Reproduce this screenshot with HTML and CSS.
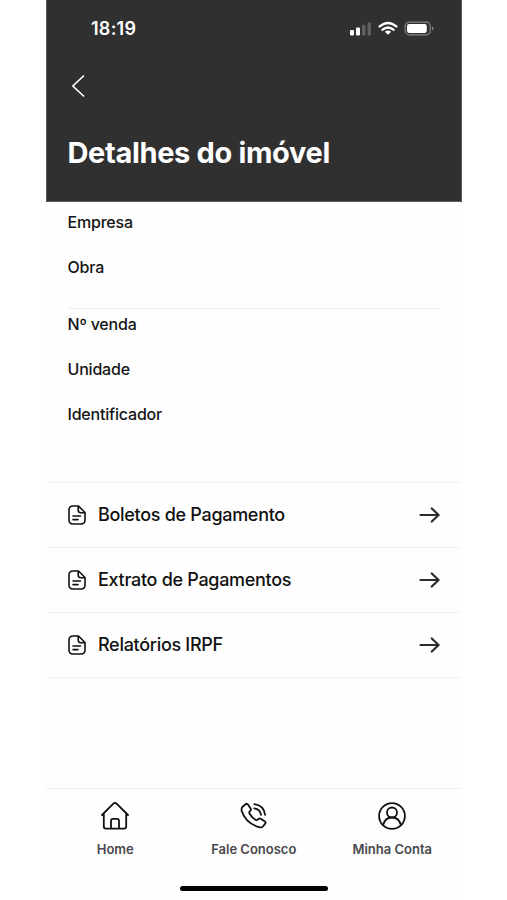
FILE: index.html
```html
<!DOCTYPE html>
<html lang="pt-BR">
<head>
<meta charset="utf-8">
<meta name="viewport" content="width=device-width, initial-scale=1">
<title>Detalhes do imóvel</title>
<link rel="stylesheet" href="styles.css">
</head>
<body>
<svg width="0" height="0" class="defs" aria-hidden="true">
  <symbol id="doc" viewBox="0 0 18 20"><path d="M10.5 1H5Q1 1 1 5v10q0 4 4 4h8q4 0 4-4V7.5ZM10.2 1.4V5q0 2.7 2.7 2.7h3.8M5 11h7.5M5 14.6h5"/></symbol>
  <symbol id="arrow" viewBox="0 0 22 16"><path d="M1.5 8h18M12.8 1.5 19.6 8l-6.8 6.5"/></symbol>
</svg>
<div class="phone">
  <header class="header">
    <div class="status">
      <span class="time">18:19</span>
      <svg class="status-icons" width="84" height="16" viewBox="0 0 84 16">
        <g fill="#fff"><rect x="0" y="9" width="4" height="5.500" rx="1"/><rect x="6" y="6.500" width="4" height="8" rx="1"/></g>
        <g fill="#606060"><rect x="12" y="3.800" width="3.500" height="10.700" rx="1"/><rect x="17.500" y="1.500" width="3.500" height="13" rx="1"/></g>
        <g fill="none" stroke="#fff" stroke-width="2.4"><path d="M29.700 5.400q8.300-7 16.600 0M32.600 8.700q5.400-4.500 10.800 0"/></g>
        <path d="M38 13.800 34.900 10.800q3.100-2.400 6.200 0Z" fill="#fff"/>
        <rect x="55.200" y="1.200" width="25" height="12.600" rx="3.800" fill="none" stroke="#858585" stroke-width="1.2"/>
        <rect x="57" y="3" width="19.800" height="9" rx="2.200" fill="#fff"/>
        <path d="M82 5.300q3 2.200 0 4.400Z" fill="#858585"/>
      </svg>
    </div>
    <svg class="back" width="14" height="22" viewBox="0 0 14 22"><path d="M12.5 1 1.8 11l10.700 10"/></svg>
    <h1 class="title">Detalhes do imóvel</h1>
  </header>
  <section class="details">
    <div class="label">Empresa</div>
    <div class="label">Obra</div>
    <hr class="divider">
    <div class="label">Nº venda</div>
    <div class="label">Unidade</div>
    <div class="label">Identificador</div>
  </section>
  <main class="links">
    <a class="link"><svg class="doc"><use href="#doc"/></svg><span>Boletos de Pagamento</span><svg class="arrow"><use href="#arrow"/></svg></a>
    <a class="link"><svg class="doc"><use href="#doc"/></svg><span>Extrato de Pagamentos</span><svg class="arrow"><use href="#arrow"/></svg></a>
    <a class="link"><svg class="doc"><use href="#doc"/></svg><span>Relatórios IRPF</span><svg class="arrow"><use href="#arrow"/></svg></a>
  </main>
  <nav class="tabs">
    <a class="tab">
      <svg width="30" height="30" viewBox="0 0 30 30"><path d="M2 14 13.400 2.700q1.600-1.500 3.200 0L28 14M3.800 12.500V25.600q0 2 2 2h18.400q2 0 2-2V12.500M11 27.500v-7.600q0-2 2-2h4q2 0 2 2v7.600"/></svg>
      <span>Home</span>
    </a>
    <a class="tab">
      <svg width="30" height="30" viewBox="0 0 30 30"><path d="M3.600 5.700 6.700 3.200q1.200-1 2.200.3l2.700 3.900q.8 1.200-.2 2.200l-.7.700q-.9 1-.1 2.400 2.300 3.900 5.900 6 1.400.8 2.200 0l.8-.8q1-1 2.200-.2l4.300 2.900q1.200.9.200 2.100l-2.300 2.800q-1.300 1.400-3.600.7Q6.600 22.300 2.700 10 2.100 7 3.600 5.700ZM15.300 7.300q5.800.9 6.700 6.500M15.300 3.100q9.500 1.100 10.800 10.700"/></svg>
      <span>Fale Conosco</span>
    </a>
    <a class="tab">
      <svg width="30" height="30" viewBox="0 0 30 30"><circle cx="15" cy="15" r="12.900"/><circle cx="15" cy="11.500" r="5"/><path d="M6 24.200q2-7.700 9-7.700t9 7.700"/></svg>
      <span>Minha Conta</span>
    </a>
  </nav>
  <div class="home-bar"></div>
</div>
</body>
</html>
```
FILE: styles.css
```css
* { box-sizing: border-box; }
body { margin: 0; background: #fff; font-family: Inter, sans-serif; }
.defs { position: absolute; }
.phone { width: 416px; height: 900px; margin-left: 46px; display: flex; flex-direction: column; background: #fefefe; }
svg { fill: none; stroke: #111; stroke-linecap: round; stroke-linejoin: round; display: block; flex: none; }
.header { height: 202px; background: #303030; color: #fff; border: 1px solid #5a5a5a; border-top: 0; padding: 17px 20.5px 0; }
.status { display: flex; align-items: center; justify-content: space-between; height: 24px; padding: 0 6.5px 0 23.5px; }
.status-icons { stroke: none; }
.time { font-size: 18px; font-weight: 600; line-height: 24px; letter-spacing: .25px; }
.back { stroke: #fff; stroke-width: 1.7; margin: 34px 0 0 3.5px; }
.title { margin: 38px 0 0; font-size: 29px; line-height: 36px; font-weight: 700; letter-spacing: -.34px; white-space: nowrap; }
.details { padding: 8px 22px 0 21.5px; height: 279.5px; }
.label { font-size: 16px; line-height: 25px; font-weight: 500; letter-spacing: -.2px; color: #151515; margin-bottom: 20px; width: max-content; }
.divider { border: 0; height: 1px; background: #ececec; margin: 28px 0 3px; }
.links { border-top: 1px solid #f1f1f1; margin: 0 0 0 2px; }
.link { height: 65px; display: flex; align-items: center; padding: 0 21.5px 0 20px; border-bottom: 1px solid #f1f1f1; font-size: 18px; font-weight: 500; letter-spacing: -.3px; color: #111; white-space: nowrap; }
.doc { width: 18px; height: 20px; stroke-width: 1.6; margin-right: 12px; }
.arrow { width: 22px; height: 16px; margin-left: auto; stroke: #292d2a; stroke-width: 2.2; }
.tabs { height: 91px; margin: auto 0 0 2px; border-top: 1px solid #f0f0f0; display: grid; grid-template-columns: repeat(3, 138.5px); padding-top: 12px; margin-left: 0; }
.tab { display: flex; flex-direction: column; align-items: center; gap: 9px; font-size: 13px; font-weight: 600; line-height: 18px; color: #48484c; white-space: nowrap; }
.tab svg { stroke-width: 1.8; }
.home-bar { width: 148px; height: 5px; border-radius: 3px; background: #000; margin: 7px auto 9px; }
```
